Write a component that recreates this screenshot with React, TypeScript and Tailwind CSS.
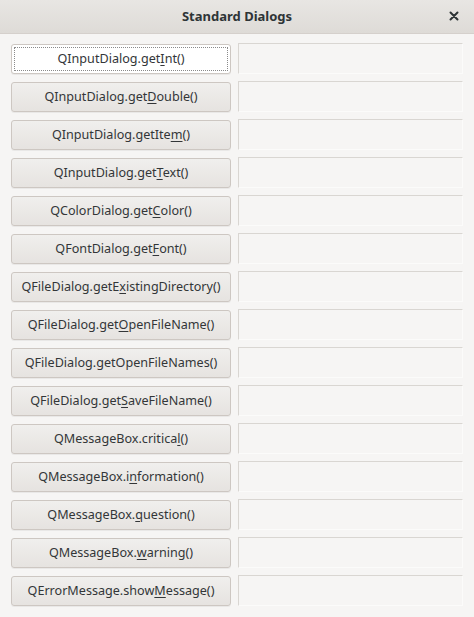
import React from "react";

type Row = { pre: string; u: string; post: string };

const rows: Row[] = [
  { pre: "QInputDialog.get", u: "I", post: "nt()" },
  { pre: "QInputDialog.get", u: "D", post: "ouble()" },
  { pre: "QInputDialog.getIte", u: "m", post: "()" },
  { pre: "QInputDialog.get", u: "T", post: "ext()" },
  { pre: "QColorDialog.get", u: "C", post: "olor()" },
  { pre: "QFontDialog.get", u: "F", post: "ont()" },
  { pre: "QFileDialog.getE", u: "x", post: "istingDirectory()" },
  { pre: "QFileDialog.get", u: "O", post: "penFileName()" },
  { pre: "QFileDialog.", u: "g", post: "etOpenFileNames()" },
  { pre: "QFileDialog.get", u: "S", post: "aveFileName()" },
  { pre: "QMessageBox.critica", u: "l", post: "()" },
  { pre: "QMessageBox.i", u: "n", post: "formation()" },
  { pre: "QMessageBox.", u: "q", post: "uestion()" },
  { pre: "QMessageBox.", u: "w", post: "arning()" },
  { pre: "QErrorMessage.show", u: "M", post: "essage()" },
];

export default function App() {
  return (
    <div
      className="w-[474px] h-[617px] bg-[#f6f5f4] flex flex-col text-[#333638] overflow-hidden"
      style={{ fontFamily: '"Noto Sans", "DejaVu Sans", sans-serif' }}
    >
      <div className="h-[34px] shrink-0 bg-gradient-to-b from-[#e8e6e3] to-[#dedbd7] border-b border-[#d5d0cc] flex items-center justify-center relative">
        <span className="text-[13px] font-bold text-[#2e3436]">Standard Dialogs</span>
        <span className="absolute right-[15px] top-[9px] leading-none">
          <svg width="10" height="10" viewBox="0 0 10 10" className="mt-[2px]">
            <path d="M1.5 1.5 L8.5 8.5 M8.5 1.5 L1.5 8.5" stroke="#2e3436" strokeWidth="2" strokeLinecap="round" />
          </svg>
        </span>
      </div>
      <div className="flex flex-col gap-[8px] pl-[11px] pr-[11px] pt-[10px]">
        {rows.map((r, i) => (
          <div key={i} className="flex gap-[7px] h-[30px]">
            <button
              className={
                "w-[220px] h-[30px] shrink-0 rounded-[3px] border text-[12.6px] flex items-center justify-center shadow-[0_1px_0_rgba(0,0,0,0.05)] " +
                (i === 0
                  ? "bg-white border-[#cdc7c2]"
                  : "bg-gradient-to-b from-[#f0efed] to-[#e6e3e0] border-[#cdc7c2]")
              }
            >
              {i === 0 ? (
                <span className="w-[214px] h-[24px] border border-dotted border-[#8a8a8a] flex items-center justify-center">
                  {r.pre}
                  <span className="underline underline-offset-2">{r.u}</span>
                  {r.post}
                </span>
              ) : (
                <span>
                  {r.pre}
                  <span className="underline underline-offset-2">{r.u}</span>
                  {r.post}
                </span>
              )}
            </button>
            <div className="flex-1 h-[31px] -mt-[1px] bg-[#f6f5f4] border-t border-l border-[#d9d6d2] border-b border-r border-b-[#fbfbfa] border-r-[#fbfbfa]" />
          </div>
        ))}
      </div>
    </div>
  );
}
